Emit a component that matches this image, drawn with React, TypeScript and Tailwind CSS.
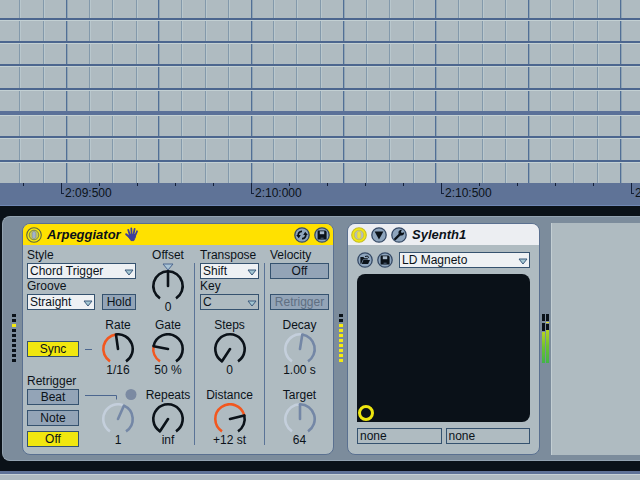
import React from "react";

const INK = "#0b1219";
const LINE = "#4c668f";

/* ---------- piano roll ---------- */

function PianoRoll() {
  const rows = [18, 41, 64, 88, 136, 160];
  return (
    <svg className="block h-[183px] w-full bg-[#afbbc1]" aria-label="Note grid" role="img">
      <defs>
        <pattern id="beats" x="66" y="0" width="277" height="183" patternUnits="userSpaceOnUse">
          {[23, 46, 70, 115, 139, 162, 207, 230, 254].map((x) => (
            <g key={x}>
              <rect x={x} width="1" height="183" fill="#8399ab" />
              <rect x={x + 1} width="1" height="183" fill="#b9c7cd" />
            </g>
          ))}
          {[0, 92, 185].map((x) => (
            <g key={x}>
              <rect x={x} width="1" height="183" fill="#516f96" />
              <rect x={x + 1} width="1" height="183" fill="#8fa3b3" />
            </g>
          ))}
        </pattern>
      </defs>
      <rect width="100%" height="183" fill="url(#beats)" />
      {rows.map((y) => (
        <g key={y}>
          <rect y={y} width="100%" height="2" fill={LINE} />
          <rect y={y + 2} width="100%" height="1" fill="#c3d0d3" />
        </g>
      ))}
      <rect y="111" width="100%" height="4" fill="#5b7199" />
      <rect y="115" width="100%" height="1" fill="#c3d0d3" />
    </svg>
  );
}

function Ruler() {
  const marks = ["2:09:500", "2:10:000", "2:10:500", "2:11:000"];
  const ticks = (
    <div className="flex justify-between pr-[37px]">
      {[0, 1, 2, 3, 4].map((n) => (
        <i key={n} className={`h-[3px] w-px ${n === 0 ? "" : "bg-[#14203a]"}`} />
      ))}
    </div>
  );
  return (
    <div className="flex h-[23px] overflow-hidden border-b border-[#7088b4] bg-[#5f7397]">
      <div className="w-[61px] shrink-0 pl-[23px]">
        <i className="block h-[3px] w-px bg-[#14203a]" />
      </div>
      {marks.map((m) => (
        <div key={m} className="w-[190px] shrink-0">
          {ticks}
          <div className="-mt-[3px] flex">
            <i className="h-[11px] w-[3px] border-b border-l border-[#14203a]" />
            <span className="pt-[3px] pl-px leading-[14px]">{m}</span>
          </div>
        </div>
      ))}
    </div>
  );
}

/* ---------- controls ---------- */

const R = 14.7;

const polar = (cx: number, cy: number, r: number, deg: number) => {
  const a = ((deg - 90) * Math.PI) / 180;
  return `${(cx + r * Math.cos(a)).toFixed(2)} ${(cy + r * Math.sin(a)).toFixed(2)}`;
};

const arc = (cy: number, from: number, to: number) =>
  `M${polar(17, cy, R, from)}A${R} ${R} 0 ${to - from > 180 ? 1 : 0} 1 ${polar(17, cy, R, to)}`;

type KnobProps = {
  label: string;
  value: string;
  angle: number;
  fill?: boolean;
  dim?: boolean;
  marker?: boolean;
  slot?: React.ReactNode;
};

function Knob({ label, value, angle, fill, dim, marker, slot }: KnobProps) {
  const cy = marker ? 23 : 16;
  const height = marker ? 37 : 30;
  const dark = dim ? "#7487a6" : INK;
  const low = dim ? "#c4cfdc" : fill ? "#f2571f" : INK;
  return (
    <label className="flex flex-col items-center">
      {slot ?? <span className="leading-[15px] whitespace-nowrap">{label}</span>}
      <span className="relative block">
        <svg width="34" height={height} className="block" fill="none" strokeWidth="2.6">
          {marker && <path d="M12 1h10l-5 6z" fill="#a9c4d6" stroke={LINE} strokeWidth="1" />}
          <path d={arc(cy, angle, 147)} stroke={dark} />
          {angle > -147 && <path d={arc(cy, -147, angle)} stroke={low} />}
          <path d={`M17 ${cy}L${polar(17, cy, R, angle)}`} stroke={dark} strokeLinecap="round" />
        </svg>
        <input
          type="range"
          min={-147}
          max={147}
          defaultValue={angle}
          aria-label={label}
          className="absolute inset-0 size-full opacity-0"
        />
      </span>
      <span className="leading-[14px] whitespace-nowrap">{value}</span>
    </label>
  );
}

function Picker({
  label,
  value,
  showLabel = true,
  arrow = true,
  plain = false,
}: {
  label: string;
  value: string;
  showLabel?: boolean;
  arrow?: boolean;
  plain?: boolean;
}) {
  return (
    <label className="block min-w-0 flex-1">
      {showLabel && <span className="block leading-[15px]">{label}</span>}
      <span className="relative block">
        <select
          aria-label={label}
          className={`block h-4 w-full appearance-none border border-[#35526f] pl-[2px] leading-[14px] ${
            plain ? "bg-transparent" : "bg-[#eef1f4]"
          }`}
        >
          <option>{value}</option>
        </select>
        {arrow && (
          <svg width="10" height="7" className="pointer-events-none absolute top-[6px] right-[2px]">
            <path d="M1 1h8L5 6z" fill="#a3c6d2" stroke="#3c5a7c" strokeLinejoin="round" />
          </svg>
        )}
      </span>
    </label>
  );
}

function Toggle({ children, on, dim }: { children: string; on?: boolean; dim?: boolean }) {
  return (
    <button
      className={`block h-4 w-full border leading-[14px] ${
        on ? "border-[#35526f] bg-[#f1e70f]" : "border-[#35526f] bg-[#93a4b7]"
      } ${dim ? "text-[#5f6f82]" : ""}`}
    >
      {children}
    </button>
  );
}

/* ---------- icons ---------- */

function Round({ label, children }: { label: string; children: React.ReactNode }) {
  return (
    <button aria-label={label} className="block size-4 shrink-0">
      <svg width="16" height="16" viewBox="0 0 16 16" className="block">
        <circle cx="8" cy="8" r="7.2" fill="#8ea5bd" stroke="#364a66" strokeWidth="1.3" />
        {children}
      </svg>
    </button>
  );
}

function Power({ lit }: { lit?: boolean }) {
  return (
    <button aria-label="Device on" className="block size-4 shrink-0">
      <svg width="16" height="16" viewBox="0 0 16 16" className="block">
        <circle cx="8" cy="8" r="7.3" fill="#f4e90f" stroke={lit ? "#c3bd28" : "#5c6440"} strokeWidth="1.1" />
        <circle cx="8" cy="8" r="4.8" fill={lit ? "#b3bcc0" : "#c9c94e"} stroke={lit ? "#c9c440" : "#7b8250"} strokeWidth="1" />
        <rect x="6.2" y="4.4" width="3.6" height="7.2" rx="1.8" fill={lit ? "#efe531" : "#a3b3cc"} stroke={lit ? "#d8d04a" : "#8593a0"} strokeWidth="0.7" />
      </svg>
    </button>
  );
}

const Disk = () => (
  <g>
    <path d="M3.6 3.6h7.8l1.200 1.200v7.600H3.6z" fill={INK} />
    <rect x="5.8" y="4.300" width="4.400" height="2.900" fill="#a9bacb" />
    <rect x="6.6" y="10.6" width="3" height="1.8" fill="#3c4c5f" />
  </g>
);

const Swap = () => (
  <g fill={INK}>
    <path d="M4.300 9.200C3.700 6.200 5.600 4.300 8 4.400" fill="none" stroke={INK} strokeWidth="1.700" />
    <path d="M11.700 6.800c.6 3-1.300 4.900-3.700 4.800" fill="none" stroke={INK} strokeWidth="1.700" />
    <path d="M2.200 8h4.600l-2 3.200zM13.800 8H9.200l2-3.200z" />
  </g>
);

const Wrench = () => (
  <g>
    <path d="M4.2 12L9.4 6.8" stroke={INK} strokeWidth="2.4" strokeLinecap="round" />
    <path d="M10.9 2.8L9.9 5l1 1.1 2.3-.9c.3 1.8-1 3.5-2.8 3.4C8.300 8.500 7.100 6.800 7.500 5c.3-1.500 1.800-2.500 3.400-2.200z" fill={INK} />
  </g>
);

const Folder = () => (
  <g>
    <path d="M3.400 11.800V5h3l1 1.200h3.400v1.400H6L4.200 11.800z" fill={INK} />
    <path d="M6.400 8.100h6.600l-1.900 4H4.700z" fill={INK} />
    <path d="M8 4.500l2.600-.5 1 1.800" stroke={INK} fill="none" />
  </g>
);

const Hand = () => (
  <svg width="14" height="15" viewBox="0 0 14 15" className="block" fill="none" stroke="#3f3f9c" strokeLinecap="round">
    <path d="M4.800 8L3.200 2.800M6.600 7.500L6.300 1.300M8.500 7.500L9.600 1.800M10 9L12 4.300" strokeWidth="1.800" />
    <path d="M4.800 10.500L1.200 7.200" strokeWidth="2" />
    <path d="M4.500 7.500h5.600l.3 2.500-1.600 3.600H6L4 10.500z" fill="#3f3f9c" strokeWidth="1" />
  </svg>
);

/* ---------- meters ---------- */

function Leds({ lit }: { lit: number[] }) {
  return (
    <div className="flex flex-col gap-[2px]">
      {Array.from({ length: 10 }, (_, n) => (
        <i key={n} className={`h-[3px] w-1 ${lit.includes(n) ? "bg-[#f4ea13]" : "bg-[#0b1219]"}`} />
      ))}
    </div>
  );
}

function LevelMeter() {
  return (
    <svg width="7" height="49" className="block">
      <defs>
        <linearGradient id="level" x1="0" y1="0" x2="0" y2="1">
          <stop offset="0" stopColor="#b5d51f" />
          <stop offset="0.5" stopColor="#6cc22f" />
          <stop offset="1" stopColor="#42b548" />
        </linearGradient>
      </defs>
      <path d="M0 0h3v7H0zM4 0h3v7H4zM0 9h3v8H0zM4 10h3v6H4z" fill={INK} />
      <rect y="18" width="3" height="31" fill="url(#level)" />
      <rect x="4" y="16" width="3" height="33" fill="url(#level)" />
      <rect x="4" y="8" width="3" height="1" fill="#e3e02a" />
    </svg>
  );
}

/* ---------- devices ---------- */

function Arpeggiator() {
  return (
    <section className="shrink-0 overflow-hidden rounded-lg border border-[#5a7090] bg-[#afbbc1]">
      <header className="flex h-[21px] items-center bg-[#ffe100] px-[3px]">
        <Power />
        <h2 className="pr-1 pl-[5px] text-[13px] font-bold italic">Arpeggiator</h2>
        <Hand />
        <div className="ml-auto flex gap-1">
          <Round label="Hot-swap preset"><Swap /></Round>
          <Round label="Save preset"><Disk /></Round>
        </div>
      </header>
      <div className="flex px-1 pt-[3px] pb-[7px]">
        <div className="flex flex-col gap-1">
          <div className="flex">
            <div className="w-[109px]">
              <Picker label="Style" value="Chord Trigger" />
              <div className="flex items-end gap-[7px]">
                <Picker label="Groove" value="Straight" />
                <div className="w-[34px]"><Toggle>Hold</Toggle></div>
              </div>
            </div>
            <div className="ml-[7px] w-[50px]">
              <Knob label="Offset" value="0" angle={0} marker />
            </div>
          </div>
          <div className="flex">
            <div className="w-[52px] pt-[23px]">
              <Toggle on>Sync</Toggle>
              <div className="pt-[17px] leading-[15px]">Retrigger</div>
              <div className="flex flex-col gap-[5px]">
                <Toggle>Beat</Toggle>
                <Toggle>Note</Toggle>
                <Toggle on>Off</Toggle>
              </div>
            </div>
            <svg width="16" height="129" className="block" stroke={LINE}>
              <path d="M6 31.500h7M6 77.500h10" />
            </svg>
            <div className="flex w-[46px] flex-col gap-[11px]">
              <Knob label="Rate" value="1/16" angle={-8} fill />
              <Knob
                label="Retrigger interval"
                value="1"
                angle={24}
                dim
                slot={
                  <svg width="46" height="15" className="block">
                    <path d="M0 7.500h21.500v4" fill="none" stroke={LINE} />
                    <circle cx="36" cy="6.500" r="5.500" fill="#7b8aa2" />
                  </svg>
                }
              />
            </div>
            <div className="ml-[2px] flex w-[50px] flex-col gap-[11px]">
              <Knob label="Gate" value="50 %" angle={-79} fill />
              <Knob label="Repeats" value="inf" angle={-147} />
            </div>
          </div>
        </div>
        <i className="mx-[1px] mt-[15px] mb-[2px] w-px bg-[#5a7397]" />
        <div className="ml-1 flex w-[59px] flex-col">
          <div className="h-[70px]">
            <Picker label="Transpose" value="Shift" />
            <Picker label="Key" value="C" plain />
          </div>
          <div className="flex flex-col gap-[11px]">
            <Knob label="Steps" value="0" angle={-147} />
            <Knob label="Distance" value="+12 st" angle={76} fill />
          </div>
        </div>
        <i className="mx-[5px] mt-[15px] mb-[2px] w-px bg-[#5a7397]" />
        <div className="flex w-[59px] flex-col">
          <div className="h-[70px]">
            <div className="leading-[15px]">Velocity</div>
            <Toggle>Off</Toggle>
            <div className="pt-[15px]"><Toggle dim>Retrigger</Toggle></div>
          </div>
          <div className="flex flex-col gap-[11px]">
            <Knob label="Decay" value="1.00 s" angle={9} dim />
            <Knob label="Target" value="64" angle={0} dim />
          </div>
        </div>
      </div>
    </section>
  );
}

function Sylenth() {
  return (
    <section className="flex w-[193px] shrink-0 flex-col overflow-hidden rounded-lg border border-[#5a7090] bg-[#afbbc1]">
      <header className="flex h-[21px] items-center gap-1 bg-[#eceef2] px-[3px]">
        <Power lit />
        <Round label="Unfold device"><path d="M3.600 4.500h8.800L8 12.600z" fill={INK} /></Round>
        <Round label="Edit plug-in"><Wrench /></Round>
        <h2 className="pl-px text-[13px] font-bold italic">Sylenth1</h2>
      </header>
      <div className="flex flex-1 flex-col gap-[6px] px-[9px] pt-[7px] pb-[10px]">
        <div className="flex gap-1">
          <Round label="Load preset"><Folder /></Round>
          <Round label="Save preset"><Disk /></Round>
          <div className="ml-[2px] flex flex-1">
            <Picker label="Preset" value="LD Magneto" showLabel={false} />
          </div>
        </div>
        <div className="flex flex-1 items-end rounded-lg rounded-bl-none bg-[#0a1118]">
          <svg width="18" height="18" className="block">
            <circle cx="9" cy="9" r="6.500" fill="none" stroke="#eee60f" strokeWidth="3" />
          </svg>
        </div>
        <div className="flex gap-1">
          <Picker label="X parameter" value="none" showLabel={false} arrow={false} plain />
          <Picker label="Y parameter" value="none" showLabel={false} arrow={false} plain />
        </div>
      </div>
    </section>
  );
}

export default function App() {
  return (
    <main className="flex min-h-screen flex-col overflow-hidden bg-[#afbbc1] font-['Liberation_Sans',Arial,sans-serif] text-[12px] text-[#0b1219]">
      <PianoRoll />
      <Ruler />
      <div className="bg-[#0a1118] py-[10px] pl-[2px]">
        <div className="flex rounded-l-lg border-t border-b border-l border-[#93a3b1] bg-[#7c8c9c] pt-[6px] pb-[5px]">
          <div className="w-[19px] shrink-0 pt-[91px] pl-[9px]">
            <Leds lit={[2]} />
          </div>
          <Arpeggiator />
          <div className="flex w-[13px] shrink-0 justify-center pt-[91px]">
            <Leds lit={[2, 3, 4, 5, 6, 7, 8, 9]} />
          </div>
          <Sylenth />
          <div className="flex w-[11px] shrink-0 justify-center pt-[91px]">
            <LevelMeter />
          </div>
          <div className="flex-1 border-l border-[#c3ced3] bg-[#afbbc1]" />
        </div>
      </div>
      <div className="h-1 border-b border-[#c7d2d6] bg-[#5f7397]" />
    </main>
  );
}
